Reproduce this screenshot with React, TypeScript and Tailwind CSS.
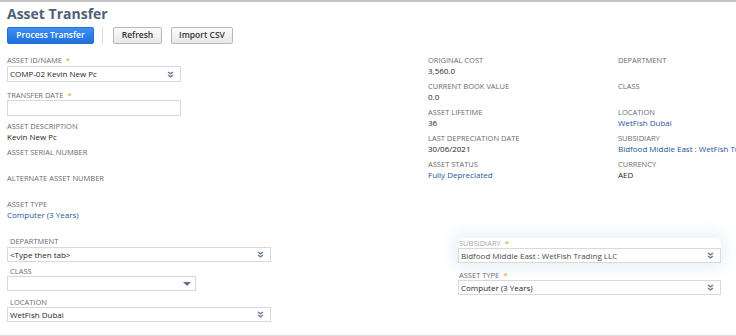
import React from "react";

const font = { fontFamily: '"Open Sans", "Liberation Sans", sans-serif' };

function DoubleChevron() {
  return (
    <svg width="7" height="7" viewBox="0 0 7 7" className="shrink-0">
      <path d="M1 1 L3.5 2.9 L6 1 M1 4 L3.5 5.9 L6 4" fill="none" stroke="#6a7d9c" strokeWidth="1.4" />
    </svg>
  );
}

function Triangle() {
  return (
    <svg width="8" height="4" viewBox="0 0 8 4" className="shrink-0">
      <path d="M0 0 H8 L4 4 Z" fill="#5b6f8f" />
    </svg>
  );
}

function Label({ text, required, muted }: { text: string; required?: boolean; muted?: boolean }) {
  return (
    <div className={`text-[7.5px] leading-[10px] uppercase whitespace-nowrap ${muted ? "text-[#a6a6a6]" : "text-[#6b6b6b]"}`}>
      {text}
      {required && <span className="text-[#e0a31a] text-[8px] ml-[4px]">*</span>}
    </div>
  );
}

function Select({
  value,
  width,
  height = "h-[15px]",
  single,
  muted,
  className = "",
}: {
  value: string;
  width: string;
  height?: string;
  single?: boolean;
  muted?: boolean;
  className?: string;
}) {
  return (
    <div className={`${width} ${height} border border-[#d9d9d9] bg-white flex items-center justify-between pl-[2px] ${single ? "pr-[4px]" : "pr-[6px]"} ${className}`}>
      <span className={`text-[8px] truncate ${muted ? "text-[#4a4a4a]" : "text-[#262626]"}`}>{value}</span>
      {single ? <Triangle /> : <DoubleChevron />}
    </div>
  );
}

function Info({ label, value, link }: { label: string; value?: string; link?: boolean }) {
  return (
    <div className="h-[26px]">
      <Label text={label} />
      <div className={`text-[8px] leading-[11px] whitespace-nowrap ${link ? "text-[#255599]" : "text-[#262626]"}`}>
        {value ?? "\u00a0"}
      </div>
    </div>
  );
}

export default function App() {
  return (
    <div style={font} className="w-[736px] h-[336px] bg-white overflow-hidden border-t-2 border-[#c6c6c6] relative">
      <h1 className="text-[14px] leading-[22px] font-bold text-[#4d5f79] pl-[7px] mt-[1px]">Asset Transfer</h1>

      <div className="flex items-center pl-[7px] mt-[2px] h-[17px]">
        <button className="w-[87px] h-[17px] rounded-[2px] bg-gradient-to-b from-[#3d90f2] to-[#1f6fd9] text-white text-[8.5px] font-semibold border border-[#2470d6]">
          Process Transfer
        </button>
        <div className="w-px h-[17px] bg-[#dcdcdc] ml-[8px] mr-[10px]" />
        <button className="w-[49px] h-[17px] rounded-[2px] bg-gradient-to-b from-[#fbfbfb] to-[#e8e8e8] border border-[#b8b8b8] text-[#333] text-[8.5px] font-semibold">
          Refresh
        </button>
        <button className="w-[62px] h-[17px] ml-[9px] rounded-[2px] bg-gradient-to-b from-[#fbfbfb] to-[#e8e8e8] border border-[#b8b8b8] text-[#333] text-[8.5px] font-semibold">
          Import CSV
        </button>
      </div>

      <div className="flex mt-[11px]">
        <div className="w-[428px] pl-[7px] shrink-0">
          <Label text="Asset ID/Name" required />
          <Select value="COMP-02 Kevin New Pc" width="w-[174px]" height="h-[16px]" className="mt-[1px]" />
          <div className="mt-[8px]">
            <Label text="Transfer Date" required />
            <div className="w-[174px] h-[16px] border border-[#d9d9d9]" />
          </div>
          <div className="mt-[5px]">
            <Info label="Asset Description" value="Kevin New Pc" />
            <Info label="Asset Serial Number" />
            <Info label="Alternate Asset Number" />
            <Info label="Asset Type" value="Computer (3 Years)" link />
          </div>
        </div>

        <div className="w-[190px] shrink-0">
          <Info label="Original Cost" value="3,560.0" />
          <Info label="Current Book Value" value="0.0" />
          <Info label="Asset Lifetime" value="36" />
          <Info label="Last Depreciation Date" value="30/06/2021" />
          <Info label="Asset Status" value="Fully Depreciated" link />
        </div>

        <div className="flex-1 min-w-0 overflow-hidden">
          <Info label="Department" />
          <Info label="Class" />
          <Info label="Location" value="WetFish Dubai" link />
          <Info label="Subsidiary" value="Bidfood Middle East : WetFish Trading LLC" link />
          <Info label="Currency" value="AED" />
        </div>
      </div>

      <div className="flex mt-[11px]">
        <div className="w-[451px] pl-[7px] shrink-0">
          <div className="pl-[3px]">
            <Label text="Department" />
          </div>
          <Select value="<Type then tab>" width="w-[264px]" className="mt-[1px]" />
          <div className="mt-[4px] pl-[3px]">
            <Label text="Class" />
          </div>
          <Select value="" width="w-[189px]" single />
          <div className="mt-[6px] pl-[3px]">
            <Label text="Location" />
          </div>
          <Select value="WetFish Dubai" width="w-[264px]" />
        </div>

        <div className="pl-[7px] pt-[2px]">
          <div className="shadow-[0_0_14px_5px_rgba(205,224,238,0.45)] rounded-[6px]">
            <div className="pl-[1px]">
              <Label text="Subsidiary" required muted />
            </div>
            <Select value="Bidfood Middle East : WetFish Trading LLC" width="w-[263px]" muted />
          </div>
          <div className="mt-[7px]">
            <div className="pl-[1px]">
              <Label text="Asset Type" required />
            </div>
            <Select value="Computer (3 Years)" width="w-[263px]" />
          </div>
        </div>
      </div>

      <div className="absolute left-0 right-0 bottom-0 h-px bg-[#dedede]" />
    </div>
  );
}
